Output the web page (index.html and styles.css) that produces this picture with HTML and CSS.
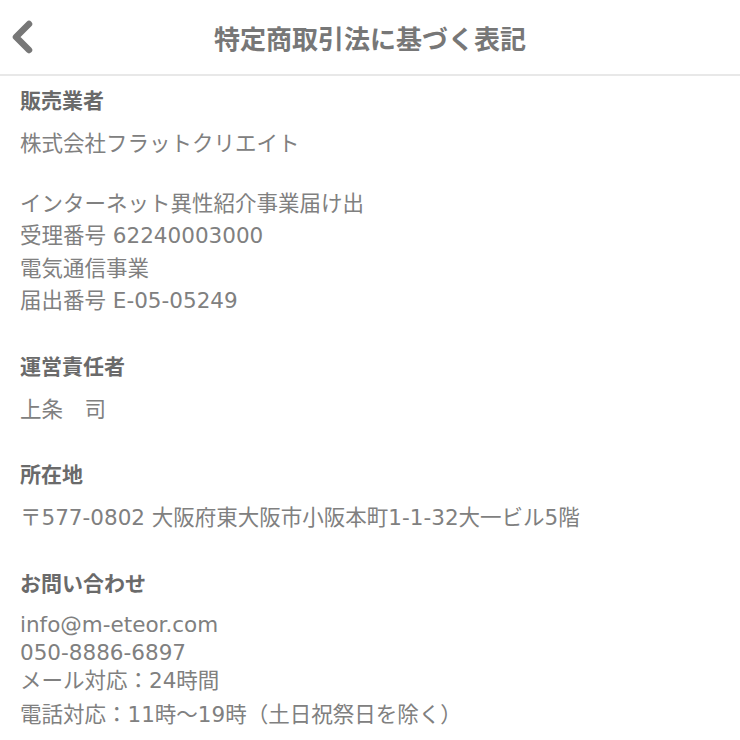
FILE: index.html
```html
<!DOCTYPE html>
<html lang="ja">
<head>
    <meta charset="UTF-8">
    <meta name="viewport" content="width=device-width, initial-scale=1.0">
    <title>特定商取引法に基づく表記</title>
    <link rel="stylesheet" href="styles.css">
</head>
<body>
    <header class="top-bar">
        <a class="back" href="#">
            <svg width="28" height="36" viewBox="0 0 28 36"><polyline points="21,5 8,18 21,31" fill="none" stroke="#777" stroke-width="6.5" stroke-linecap="round" stroke-linejoin="round"/></svg>
        </a>
        <h1>特定商取引法に基づく表記</h1>
    </header>

    <main class="content">
        <!-- 販売業者 -->
        <section class="item">
            <h2>販売業者</h2>
            <p>株式会社フラットクリエイト</p>
            <p>インターネット異性紹介事業届け出<br>受理番号 62240003000<br>電気通信事業<br>届出番号 E-05-05249</p>
        </section>

        <!-- 運営責任者 -->
        <section class="item">
            <h2>運営責任者</h2>
            <p>上条　司</p>
        </section>

        <!-- 所在地 -->
        <section class="item">
            <h2>所在地</h2>
            <p>〒577-0802 大阪府東大阪市小阪本町1-1-32大一ビル5階</p>
        </section>

        <!-- お問い合わせ -->
        <section class="item">
            <h2>お問い合わせ</h2>
            <p class="contact">info@m-eteor.com<br>050-8886-6897<br>メール対応：24時間<span class="last">電話対応：11時〜19時（土日祝祭日を除く）</span></p>
        </section>
    </main>
</body>
</html>
```

FILE: styles.css
```css
body { margin: 0; font-family: "DejaVu Sans", "Noto Sans CJK JP", sans-serif; color: #808080; background: #fff; }
.top-bar { position: relative; height: 74px; border-bottom: 2px solid #e8e8e8; display: flex; align-items: center; justify-content: center; }
.top-bar h1 { margin: 0; font-size: 26px; font-weight: bold; color: #777; }
.back { position: absolute; left: 8px; top: 19px; display: block; }
.content { padding: 0 20px; }
.item { margin-bottom: 24px; }
.item h2 { margin: 0; padding-top: 10px; font-size: 21px; line-height: 30px; color: #6a6a6a; font-weight: bold; }
.item p { margin: 12px 0 0; font-size: 21.5px; line-height: 32.5px; }
.item p + p { margin-top: 27px; }
.item .contact { line-height: 28px; }
.contact .last { display: block; margin-top: 6px; }
```
